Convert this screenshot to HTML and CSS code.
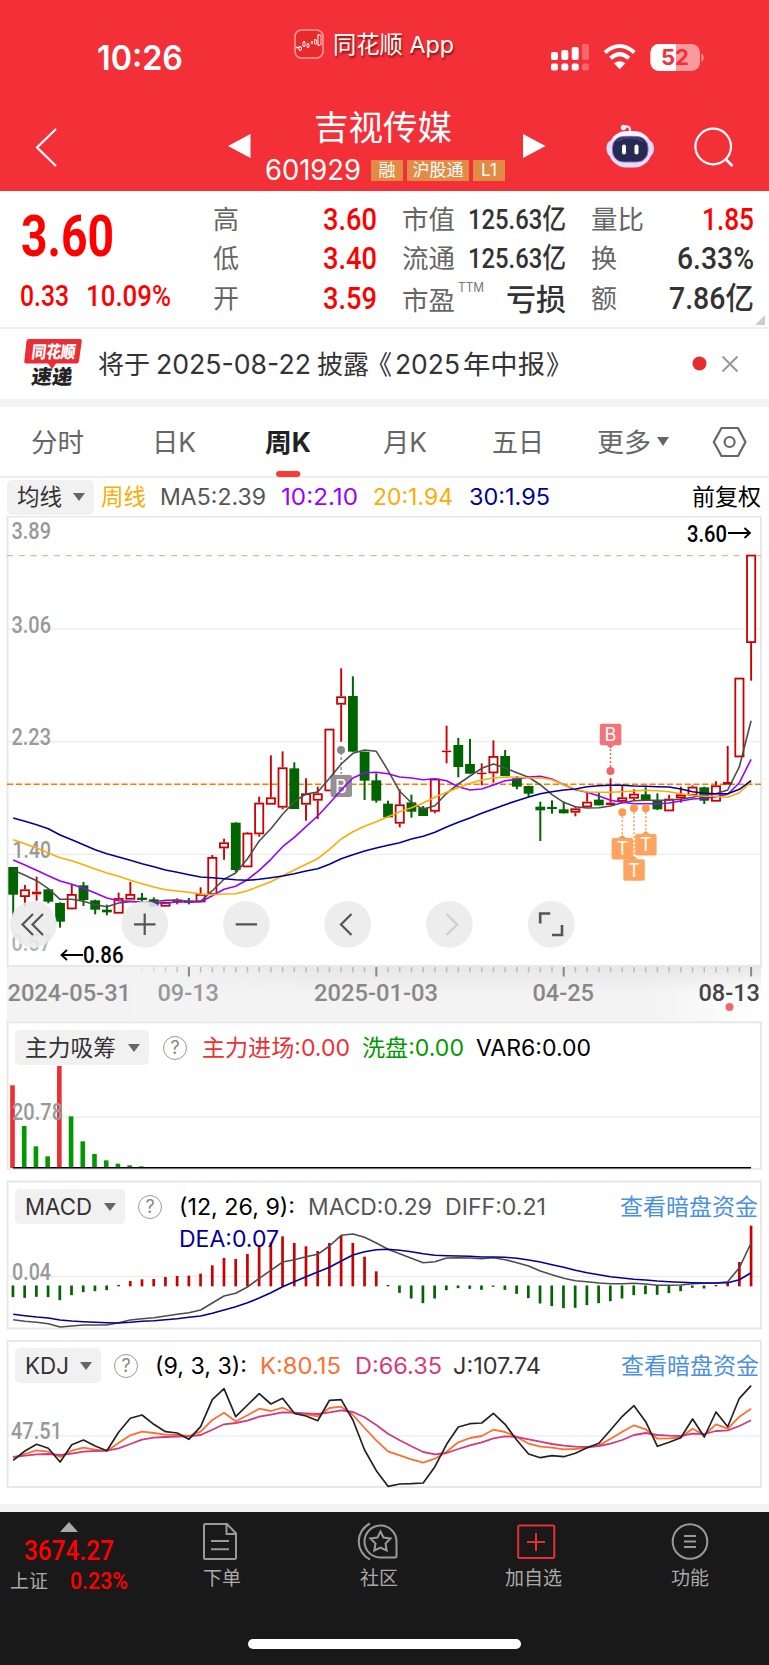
FILE: index.html
```html
<!DOCTYPE html>
<html lang="zh-CN">
<head>
<meta charset="utf-8">
<title>吉视传媒 601929</title>
<link rel="stylesheet" href="styles.css">
</head>
<body>
<header class="header">
  <div class="status">
    <span class="clock" data-w="86">10:26</span>
    <div class="island">
      <svg class="app-icon" width="30" height="30" viewBox="0 0 30 30"><rect x="1" y="1" width="28" height="28" rx="6.5" fill="#e92a2c" stroke="#f79a9c" stroke-width="1.6"/><path d="M2 18.500h3M6 17v5M10 12v6M14 14v5M18 12v3M21 10v5M24.500 5v12" stroke="#fff" stroke-width="1.5"/><path d="M5 18h2.500v3H5zM9 13h2v4H9zM13 15h2v3h-2zM20.500 11h2v4h-2zM24 6h3v10h-3z" fill="#e92a2c" stroke="#fff" stroke-width=".8"/></svg>
      <span data-w="121">同花顺 App</span>
    </div>
    <svg class="signals" width="155" height="30" viewBox="550 43 155 30">
      <g fill="#fff"><rect x="551" y="52" width="7" height="8" rx="2"/><rect x="561.300" y="50" width="7" height="10" rx="2"/><rect x="571.700" y="47" width="7" height="13" rx="2"/><rect x="551" y="63.500" width="7" height="7" rx="2"/><rect x="561.300" y="63.500" width="7" height="7" rx="2"/><rect x="571.700" y="63.500" width="7" height="7" rx="2"/></g>
      <g fill="#f4676c"><rect x="582" y="44" width="7" height="16" rx="2"/><rect x="582" y="63.500" width="7" height="7" rx="2"/></g>
      <g fill="none" stroke="#fff" stroke-width="4"><path d="M605 52.500q14.700-13 29.400 0"/><path d="M610.500 58.300q9.200-8.200 18.400 0"/></g>
      <path d="M614 63.300q5.700-4.300 11.400 0L619.700 69.300z" fill="#fff"/>
      <rect x="650.500" y="44" width="49.500" height="27" rx="8.500" fill="#fa9a9d"/><path d="M676 44h-17a8.500 8.500 0 0 0-8.500 8.500v10a8.500 8.500 0 0 0 8.500 8.500h17z" fill="#fff"/>
      <path d="M701.500 53q4.500 4.500 0 9z" fill="#fa9a9d"/>
      <text x="661" y="65.300" textLength="28" lengthAdjust="spacingAndGlyphs" class="batt">52</text>
    </svg>
  </div>
  <div class="nav">
    <svg width="26" height="42" viewBox="34 126 26 42"><path d="M56 129L37 147.500L56 166" fill="none" stroke="#fff" stroke-width="2.200"/></svg>
    <svg width="24" height="26" viewBox="0 0 24 26"><path d="M0 13L22.500 1v24z" fill="#fff"/></svg>
    <div class="title">
      <h1 data-w="138">吉视传媒</h1>
      <div class="code"><span class="num" data-w="96">601929</span><i>融</i><i>沪股通</i><i>L1</i></div>
    </div>
    <svg width="24" height="26" viewBox="0 0 24 26"><path d="M22.500 13L0 1v24z" fill="#fff"/></svg>
    <svg width="52" height="46" viewBox="604 123 52 46">
      <path d="M629 134v-5q-1-3.500-5.500-2.500" fill="none" stroke="#e9e6f8" stroke-width="2.200"/><circle cx="622.500" cy="127.500" r="2.700" fill="#f2effc"/>
      <ellipse cx="609.500" cy="148.500" rx="4" ry="7.500" fill="#d9dcf8"/><ellipse cx="649" cy="148.500" rx="4" ry="7.500" fill="#cfd2f4"/>
      <rect x="607.500" y="131" width="43.500" height="36.500" rx="18" fill="#dfe0f7"/><path d="M613 139q16-12 32 0" stroke="#f7f6fe" stroke-width="4" fill="none"/>
      <rect x="611.500" y="136.500" width="35.500" height="25.500" rx="11" fill="#252a50" stroke="#9b63d5" stroke-width="1"/><path d="M616 141q13-7 26 0" stroke="#3c4376" stroke-width="2" fill="none"/>
      <rect x="621" y="144.500" width="4" height="10" rx="2" fill="#fff"/><rect x="633.500" y="144.500" width="4" height="10" rx="2" fill="#fff"/>
    </svg>
    <svg width="42" height="42" viewBox="692 126 42 42"><circle cx="712.200" cy="146.500" r="17.800" fill="none" stroke="#fff" stroke-width="2.200"/><path d="M725 159.500l6.500 6.500" stroke="#fff" stroke-width="2.600"/></svg>
  </div>
</header>

<section class="stats">
  <div class="price">
    <b class="num" data-w="93">3.60</b>
    <div class="chg num"><span data-w="49">0.33</span><span data-w="85">10.09%</span></div>
  </div>
  <dl class="cells">
    <dt data-w="26">高</dt><dd class="num red" data-w="54">3.60</dd><dt data-w="53">市值</dt><dd class="num mid" data-w="98">125.63亿</dd><dt data-w="53">量比</dt><dd class="num red" data-w="52">1.85</dd>
    <dt data-w="26">低</dt><dd class="num red" data-w="54">3.40</dd><dt data-w="53">流通</dt><dd class="num mid" data-w="98">125.63亿</dd><dt data-w="26">换</dt><dd class="num" data-w="77">6.33%</dd>
    <dt data-w="26">开</dt><dd class="num red" data-w="54">3.59</dd><dt class="pe"><span data-w="53">市盈</span><sup data-w="26">TTM</sup></dt><dd class="loss" data-w="60">亏损</dd><dt data-w="26">额</dt><dd class="num" data-w="85">7.86亿</dd>
  </dl>
  <svg class="corner" width="10" height="10" viewBox="0 0 10 10"><path d="M10 0v10H0z" fill="#ccc"/></svg>
</section>

<section class="notice">
  <svg width="60" height="60" viewBox="23 332 60 60"><path d="M29 339h51q2 0 1.800 2L79 361q-.3 2.500-2.500 2.500H56l-4 5.500l-4-5.500H26.500q-2.500 0-2.200-2.500L26.500 341q.3-2 2.500-2z" fill="#ea2e33"/>
  <text class="logo-a" transform="skewX(-7)" x="75" y="358" textLength="44" lengthAdjust="spacingAndGlyphs">同花顺</text><text class="logo-b" transform="skewX(-7)" x="78" y="384" textLength="41" lengthAdjust="spacingAndGlyphs">速递</text></svg>
  <span class="msg"><span data-w="52">将于</span><span data-w="155">2025-08-22</span><span data-w="52">披露</span><span data-w="26">《</span><span data-w="65">2025</span><span data-w="82">年中报</span><span data-w="26">》</span></span>
  <svg width="29" height="20" viewBox="692 354 29 20"><circle cx="699.500" cy="363.500" r="7" fill="#e82d31"/></svg>
  <svg width="18" height="18" viewBox="0 0 18 18"><path d="M1.500 1.500l15 15M16.500 1.500l-15 15" stroke="#999" stroke-width="2"/></svg>
</section>

<nav class="tabs">
  <span data-w="53">分时</span><span data-w="44">日K</span><span class="on" data-w="46">周K</span><span data-w="44">月K</span><span data-w="52">五日</span><span data-w="54">更多</span>
  <svg width="12" height="9" viewBox="0 0 12 9"><path d="M0 0h12L6 9z" fill="#666"/></svg>
  <svg width="35" height="32" viewBox="712 425 35 32"><path d="M713.800 441L721.500 427H738L745.500 441L738 455H721.500z" fill="none" stroke="#666" stroke-width="2.200" stroke-linejoin="round"/><circle cx="729.600" cy="441" r="5" fill="none" stroke="#666" stroke-width="2.200"/></svg>
</nav>

<div class="legend">
  <span class="btn"><span data-w="45">均线</span><s></s></span>
  <span class="c-y" data-w="45">周线</span><span class="c-g" data-w="106">MA5:2.39</span><span class="c-p" data-w="77">10:2.10</span><span class="c-y" data-w="80">20:1.94</span><span class="c-b" data-w="81">30:1.95</span><span class="c-k" data-w="69">前复权</span>
</div>
<svg class="kline" id="kline" width="769" height="505" viewBox="0 516 769 505"></svg>

<section class="panel">
  <svg id="main-force" width="769" height="150" viewBox="0 1021 769 150"></svg>
  <div class="bar bar1"><span class="btn"><span data-w="91">主力吸筹</span><s></s></span><em>?</em><span class="c-r" data-w="148">主力进场:0.00</span><span class="c-gr" data-w="102">洗盘:0.00</span><span class="c-k" data-w="115">VAR6:0.00</span></div>
</section>
<section class="panel">
  <svg id="macd" width="769" height="150" viewBox="0 1180 769 150"></svg>
  <div class="bar bar2"><span class="btn"><span data-w="67">MACD</span><s></s></span><em>?</em><span class="c-k" data-w="116">(12, 26, 9):</span><span class="c-g" data-w="124">MACD:0.29</span><span class="c-g" data-w="101">DIFF:0.21</span><span class="link" data-w="138">查看暗盘资金</span><span class="dea c-b" data-w="100">DEA:0.07</span></div>
</section>
<section class="panel">
  <svg id="kdj" width="769" height="150" viewBox="0 1339 769 150"></svg>
  <div class="bar bar3"><span class="btn"><span data-w="44">KDJ</span><s></s></span><em>?</em><span class="c-k" data-w="92">(9, 3, 3):</span><span class="c-o" data-w="81">K:80.15</span><span class="c-m" data-w="87">D:66.35</span><span class="c-d" data-w="88">J:107.74</span><span class="link" data-w="138">查看暗盘资金</span></div>
</section>

<footer class="footer">
  <div class="index"><svg width="18" height="10" viewBox="0 0 18 10"><path d="M0 10L9 0l9 10z" fill="#aaa"/></svg><b class="num" data-w="90">3674.27</b><div><span data-w="38">上证</span><b class="num" data-w="58">0.23%</b></div></div>
  <a class="i1"><svg width="42" height="40" viewBox="199 1521 42 40"><path d="M205 1524h22l9 9.500v24q0 1.500-1.500 1.500h-29.500q-1 0-1-1.500v-32q0-1.500 1-1.500zM226.500 1524v10H236M211 1541h18M211 1549.300h18"/></svg><span data-w="38">下单</span></a>
  <a class="i2"><svg width="42" height="40" viewBox="357 1521 42 40"><path d="M370 1523.500a20 20 0 0 0 0 36M396.500 1541v15q0 1.500-1.500 1.500H380a16 16 0 1 1 16.500-16.500zM380.500 1531.500l3 6l7 1l-5 5l1.200 7l-6.200-3l-6.200 3l1.200-7l-5-5l7-1z"/></svg><span data-w="38">社区</span></a>
  <a class="i3"><svg width="42" height="40" viewBox="515 1521 42 40"><path class="add" d="M519.500 1525.500h33.500q1.300 0 1.300 1.300v30q0 1.300-1.300 1.300h-33.500q-1.300 0-1.300-1.300v-30q0-1.300 1.300-1.300zM536 1533v18M527 1542h18"/></svg><span data-w="57">加自选</span></a>
  <a class="i4"><svg width="42" height="40" viewBox="669 1521 42 40"><circle cx="690" cy="1541.500" r="17.300"/><path d="M684 1536h12M684 1541.500h12M684 1547h12"/></svg><span data-w="38">功能</span></a>
  <div class="home"></div>
</footer>
<script src="chart.js"></script>
</body>
</html>
```
FILE: styles.css
```css
* { box-sizing: border-box; }
body { margin: 0; width: 769px; height: 1665px; overflow: hidden; background: #fff; font-family: Inter, "Noto Sans CJK SC", sans-serif; color: #333; line-height: 1.2; }
svg { display: block; flex: none; }
[data-w] { display: inline-block; white-space: nowrap; transform-origin: 0 50%; flex: none; }
.num { font-family: Roboto, "Noto Sans CJK SC", sans-serif; font-weight: 500; }

.header { height: 191px; background: #f33038; color: #fff; }
.status { height: 100px; display: grid; grid-template-columns: 97px 197px 256px 1fr; }
.clock { grid-column: 2; font-size: 34px; font-weight: 600; line-height: 40px; padding-top: 38px; }
.island { display: flex; align-items: center; gap: 9px; height: 36px; margin-top: 26px; font-size: 23.5px; text-shadow: 1px 2px 2px rgba(90,0,0,.7); }
.island span { padding-top: 2px; }
.signals { margin-top: 43px; }
.batt { font: 700 21px Inter; fill: #f33038; }
.nav { display: grid; grid-template-columns: 34px 194px 33px 262px 82px 88px 1fr; align-items: start; height: 91px; }
.nav > :first-child { grid-column: 2; margin-top: 26px; }
.nav > :nth-child(2), .nav > :nth-child(4) { margin-top: 33px; }
.nav > :nth-child(5) { margin-top: 23px; }
.nav > :nth-child(6) { margin-top: 26px; }
.title { padding-top: 7px; }
.title h1 { margin: 0 0 0 53px; font-size: 34.5px; font-weight: 400; line-height: 42px; display: block; }
.code { display: flex; align-items: center; gap: 4px; height: 22px; margin-top: 10px; padding-left: 4px; }
.code .num { font-size: 28px; font-weight: 400; line-height: 22px; margin-right: 6px; font-family: Inter; }
.code i { font-style: normal; font-size: 17px; line-height: 21px; height: 21px; padding: 0 5.5px; background: #e18b45; min-width: 32px; text-align: center; }

.stats { height: 138px; border-bottom: 2px solid #eee; display: flex; position: relative; }
.price { width: 213px; padding: 16px 0 0 21px; color: #f00; }
.price b { display: block; font-size: 57px; line-height: 60px; font-weight: 700; }
.chg { display: flex; gap: 17px; font-size: 29px; line-height: 34px; margin: 12px 0 0 -1px; }
.cells { margin: 9px 0 0; display: grid; grid-template-columns: 26px 138px 79px 110px 77px 111px; grid-auto-rows: 39.5px; align-items: center; }
.cells dt { font-size: 26px; line-height: 36px; color: #666; }
.cells dt:nth-of-type(3n+2), .cells dt:nth-of-type(3n) { margin-left: 25px; }
.cells dd { margin: 0; justify-self: end; font-size: 31px; line-height: 36px; }
.cells .mid { font-size: 28px; }
.cells .loss { font-size: 30px; font-weight: 500; }
.cells .red { color: #f00; }
.pe { display: flex; position: relative; top: 2px; }
.pe sup { font-size: 13px; line-height: 14px; margin: -3px 0 0 3px; align-self: flex-start; color: #777; }
.corner { position: absolute; right: 4px; bottom: 2px; }

.notice { height: 70px; display: grid; grid-template-columns: 23px 75px 594px 29px 1fr; align-items: center; }
.notice > :first-child { grid-column: 2; margin-top: -4px; }
.logo-a { font: 900 17px "Noto Sans CJK SC"; fill: #fff; }
.logo-b { font: 900 20px "Noto Sans CJK SC"; fill: #222; }
.msg { display: grid; grid-template-columns: 58px 161px 49px 29px 68px 83px 26px; font-size: 26.5px; line-height: 36px; }

.tabs { height: 79px; border-top: 8px solid #f4f4f4; border-bottom: 2px solid #eee; display: grid; grid-template-columns: 31px 121px 113px 118px 109px 105px 60px 55px 1fr; align-items: center; font-size: 26.5px; line-height: 38px; color: #666; }
.tabs > :first-child { grid-column: 2; }
.tabs .on { color: #222; font-weight: 700; position: relative; }
.tabs .on::after { content: ""; position: absolute; left: 11px; bottom: -16px; width: 24px; height: 6px; border-radius: 3px; background: #fa3b32; }

.legend { height: 38px; display: grid; grid-template-columns: 7px 94px 59px 121px 92px 96px 223px 1fr; align-items: center; font-size: 22.5px; line-height: 34px; }
.legend > :first-child { grid-column: 2; }
.btn { display: flex; align-items: center; justify-content: space-between; height: 35px; padding: 0 9px 0 10px; background: #f1f1f1; border-radius: 5px; color: #333; }
.legend .btn { width: 87px; }
.btn s { width: 0; border: solid transparent; border-width: 8px 6px 0; border-top-color: #666; }
.c-y { color: #ffab00; } .c-g { color: #555; } .c-p { color: #9a00ff; } .c-b { color: #000099; } .c-k { color: #000; }
.c-r { color: #ee3035; } .c-gr { color: #009a00; } .c-o { color: #ff6f2e; } .c-m { color: #d43a7d; } .c-d { color: #333; }
.link { color: #4a90e2; }

.panel { display: grid; height: 150px; margin-bottom: 9px; }
.panel > * { grid-area: 1 / 1; }
.bar { display: grid; align-items: center; align-content: start; grid-auto-rows: 35px; padding: 9px 0 0 15px; font-size: 22.5px; line-height: 34px; }
.bar em { width: 24px; height: 24px; border: 1.6px solid #999; border-radius: 50%; color: #888; font-style: normal; font-size: 18px; line-height: 21px; text-align: center; }
.bar1 { grid-template-columns: 134px 14px 39px 160px 114px 1fr; }
.bar2 { grid-template-columns: 110px 13px 41px 129px 137px 175px 1fr; }
.bar3 { grid-template-columns: 86px 13px 41px 105px 95px 98px 168px 1fr; }
.bar .btn + em { grid-column: 3; }
.dea { grid-column: 4; grid-row: 2; margin-top: -6px; }

.axis { font: 500 23px Roboto; fill: #999; }
.badge { font: 400 18px Inter; fill: #fff; }

.footer { margin-top: 15px; height: 161px; border-top: 8px solid #f4f4f4; background: #191919; color: #aaa; display: grid; grid-template-columns: 203px 157px 145px 166px 1fr; grid-template-rows: 127px 10px; font-size: 19px; line-height: 24px; }
.footer a svg { margin-bottom: 6px; fill: none; stroke: #999; stroke-width: 2; }
.footer a .add { stroke: #e62e33; }
.footer a { padding-top: 9px; }
.i1 svg { margin-left: -4px; } .i2 svg { margin-left: -3px; } .i3 svg { margin-left: 10px; } .i4 svg { margin-left: -2px; }
.index { padding: 10px 0 0 10px; }
.index svg { margin-left: 50px; }
.index b { color: #f00; }
.index > b { display: block; font-size: 28px; line-height: 28px; margin: 5px 0 0 14px; }
.index div { display: flex; align-items: center; gap: 22px; line-height: 26px; margin-top: 4px; }
.index div b { font-size: 23px; }
.home { grid-column: 1 / -1; justify-self: center; width: 273px; height: 10px; border-radius: 5px; background: #fff; }
```
FILE: chart.js
```javascript
// Squeeze or stretch each label to its designed width.
document.querySelectorAll('[data-w]').forEach(function (el) {
  var w = +el.dataset.w;
  var range = document.createRange();
  range.selectNodeContents(el);
  var natural = range.getBoundingClientRect().width;
  el.style.width = w + 'px';
  el.style.transform = 'scaleX(' + (w / natural) + ')';
});

var X = function (i) { return 13.2 + 11.713 * i; };
function line(vals, top, color, w) {
  return '<polyline fill="none" stroke="' + color + '" stroke-width="' + (w || 1.6) + '" stroke-linejoin="round" points="' +
    vals.map(function (v, i) { return X(i).toFixed(1) + ',' + (top + v / 3).toFixed(1); }).join(' ') + '"/>';
}
function seg(x1, y1, x2, y2, c, w, extra) {
  return '<line x1="' + x1 + '" y1="' + y1 + '" x2="' + x2 + '" y2="' + y2 + '" stroke="' + c + '" stroke-width="' + w + '" ' + (extra || '') + '/>';
}
function rect(x, y, w, h, f, extra) {
  return '<rect x="' + x + '" y="' + y + '" width="' + w + '" height="' + h + '" fill="' + f + '" ' + (extra || '') + '/>';
}
function text(x, y, w, s, extra) {
  return '<text class="axis" x="' + x + '" y="' + y + '" textLength="' + w + '" lengthAdjust="spacingAndGlyphs" ' + (extra || '') + '>' + s + '</text>';
}
function frame(y, h, mid) {
  return rect(7.5, y, 753.5, h, '#fff', 'stroke="#e8e8e8" stroke-width="2"') + seg(8, mid, 760, mid, '#ececec', 1.3);
}

// Weekly candles: direction, high, body top, body bottom, low (thirds of a pixel from y=760).
var candles = [
  ['g',321,321,404,470],['r',375,388,411,440],['r',350,395,403,422],['g',388,388,425,430],['g',427,429,485,503],['r',374,402,448,448],['g',366,376,420,438],['g',419,421,449,463],
  ['g',434,449,457,466],['r',398,414,461,461],['r',366,402,419,419],['g',399,413,420,427],['g',412,418,440,440],['r',425,425,440,440],['r',415,419,427,433],['g',414,422,428,433],
  ['r',382,402,427,427],['r',285,291,405,405],['r',236,247,265,299],['g',187,188,330,337],['r',216,218,322,322],['r',110,128,223,230],['r',-14,112,134,134],['r',-26,22,143,148],
  ['g',7,25,147,147],['r',55,100,134,182],['r',80,100,122,177],['r',-94,-94,94,94],['r',-275,-191,-166,-55],['g',-251,-192,-25,-25],['g',-25,-25,62,120],['g',40,61,122,128],
  ['g',122,131,172,172],['r',88,133,191,202],['g',104,127,155,173],['g',138,143,168,168],['r',54,56,155,160],['r',-103,-28,-24,10],['g',-66,-45,21,52],['g',-63,12,41,41],
  ['r',10,38,42,76],['r',-59,-12,40,68],['g',-30,-12,48,48],['g',48,55,80,88],['g',77,78,101,110],['g',125,140,151,243],['g',121,141,147,161],['g',125,148,160,160],
  ['r',140,145,158,169],['r',97,125,142,142],['g',99,119,136,136],['r',55,128,135,135],['r',75,112,125,130],['r',88,101,116,122],['g',82,103,120,120],['g',100,120,148,150],
  ['r',105,116,154,154],['r',80,103,115,128],['r',76,80,107,107],['g',80,82,122,132],['r',64,76,125,125],['r',-42,66,74,74],['r',-247,-247,-8,-8],['r',-616,-616,-351,-238]
];
var ma5 = [330,346,362,386,418,418,424,434,440,429,425,425,425,421,420,424,424,392,358,339,296,243,206,163,125,102,96,55,12,-20,-30,-26,31,94,128,148,137,100,72,48,25,12,24,38,52,74,104,127,140,144,143,138,128,122,121,121,120,118,112,104,101,90,20,-118];
var ma10 = [300,315,331,347,363,373,385,399,414,422,424,426,428,430,425,427,425,407,388,379,359,331,298,260,232,200,168,130,90,54,38,37,41,51,54,59,56,62,80,90,87,75,62,58,51,49,57,74,89,97,108,121,127,131,131,131,129,123,117,115,110,103,68,-2];
var ma20 = [239,251,264,279,293,302,314,327,339,349,361,371,381,389,393,397,402,404,402,401,392,379,365,347,330,313,296,268,237,215,199,185,170,155,143,129,112,97,83,70,60,54,51,52,54,53,59,74,88,96,97,97,95,93,91,92,95,101,106,109,109,112,98,66];
var ma30 = [174,184,194,206,225,239,254,269,281,291,301,311,320,330,337,344,351,353,356,359,361,358,353,348,341,333,326,313,296,284,273,264,256,248,237,229,217,201,187,174,160,147,134,122,111,101,95,90,87,80,77,76,76,78,79,80,81,87,95,100,101,101,88,62];

(function () {
  var s = '<defs><linearGradient id="fade"><stop offset="0" stop-color="#f3f3f3"/><stop offset=".85" stop-color="#f3f3f3"/><stop offset="1" stop-color="#fff"/></linearGradient>' +
    '<linearGradient id="shade" x2="0" y2="1"><stop offset="0" stop-color="#e8e8e8"/><stop offset=".5" stop-color="#e8e8e8" stop-opacity="0"/></linearGradient>' +
    '<linearGradient id="left"><stop offset="0" stop-color="#f4f4f4"/><stop offset="1" stop-color="#f4f4f4" stop-opacity="0"/></linearGradient></defs>';
  s += rect(7, 967, 755, 54, 'url(#fade)') + rect(130, 967, 631, 54, 'url(#shade)') + rect(130, 967, 180, 54, 'url(#left)');
  s += frame(516.5, 449.5, 629.2) + seg(8, 741.7, 760, 741.7, '#ececec', 1.3) + seg(8, 854.3, 760, 854.3, '#ececec', 1.3);
  s += seg(7, 555.7, 761, 555.7, '#e0b98c', 1.3, 'stroke-dasharray="6 5.72"');
  s += seg(7, 784.3, 761, 784.3, '#ff7a00', 1.6, 'stroke-dasharray="6.3 2.5"');
  s += text(11.5, 539.3, 39.5, '3.89') + text(11.5, 632.5, 39.5, '3.06') + text(11.5, 745.2, 39.5, '2.23') + text(12.5, 857.5, 38.5, '1.40') + text(11.5, 951, 39.5, '0.57', 'opacity=".75"');
  candles.forEach(function (c, i) {
    var x = X(i), y = function (v) { return 760 + v / 3; };
    if (i === 28) {
      s += seg(341.2, 752, 341.2, 774, '#888', 1.4, 'stroke-dasharray="3 2"') + '<circle cx="341" cy="750" r="4" fill="#888"/>' + rect(330.500, 775, 21.500, 22, '#929292', 'rx="2"') + '<text class="badge" x="335" y="792.500">B</text>';
    }
    if (c[0] === 'g') {
      s += seg(x, y(c[1]), x, y(c[4]), '#006400', 2) + rect(x - 4.9, y(c[2]), 9.8, (c[3] - c[2]) / 3, '#006400');
    } else {
      if (c[1] < c[2]) s += seg(x, y(c[1]), x, y(c[2]), '#cc0000', 1.9);
      if (c[4] > c[3]) s += seg(x, y(c[3]), x, y(c[4]), '#cc0000', 1.9);
      var h = (c[3] - c[2]) / 3;
      s += h < 3.2 ? rect(x - 4.7, y(c[2]), 9.4, Math.max(h, 1.5), '#cc0000')
        : rect(x - 4.1, y(c[2]) + 0.9, 8.2, h - 1.8, '#fff', 'stroke="#cc0000" stroke-width="1.8"');
    }
  });
  s += line(ma5, 760, '#4d4d4d') + line(ma10, 760, '#9a00ff') + line(ma20, 760, '#ffab00') + line(ma30, 760, '#000099');

  function marker(x, dotY, boxY, label, color, below) {
    var edge = below ? boxY : boxY + 21.5;
    return seg(x, dotY, x, edge, color, 1.5, 'stroke-dasharray="2 2"') + '<circle cx="' + x + '" cy="' + dotY + '" r="4" fill="' + color + '"/>' +
      rect(x - 10.7, boxY, 21.5, 21.5, color, 'rx="2" opacity=".9"') +
      '<path fill="' + color + '" d="M' + (x - 4) + ' ' + edge + 'l4 ' + (below ? -3 : 3) + 'l4 ' + (below ? 3 : -3) + 'z"/>' +
      '<text class="badge" text-anchor="middle" x="' + x + '" y="' + (boxY + 17.3) + '">' + label + '</text>';
  }
  s += marker(610.5, 771, 723.8, 'B', '#f2646a') + marker(622.3, 812.3, 838, 'T', '#ff9a4d', true) + marker(645.8, 808.3, 834, 'T', '#ff9a4d', true) + marker(634, 808.3, 859.3, 'T', '#ff9a4d', true);

  s += text(687, 541.5, 40, '3.60', 'style="fill:#000"') + text(83, 963.3, 40.5, '0.86', 'style="fill:#000"');
  s += '<g fill="none" stroke="#000" stroke-width="1.8"><path d="M728 533h22M744.500 528l5.500 5l-5.500 5M83 955H61.500M67 950l-5.500 5l5.500 5"/></g>';

  [33.3, 144.7, 246.3, 347.7, 449.3, 551.3].forEach(function (x) { s += '<circle cx="' + x + '" cy="924.3" r="23.4" fill="#ebebeb" fill-opacity=".88"/>'; });
  s += '<g fill="none" stroke="#555" stroke-width="2.2"><path d="M33 914L22.500 924.500L33 935M43 914L32.500 924.500L43 935M134 924.300h21.500M144.700 913.500v21.500M235.700 924.300H257M351.500 914L341 924.500L351.500 935"/><path stroke-width="2.600" d="M540.200 923.500V913.500h10M562 925v10H552"/><path stroke="#cfcfcf" d="M446.500 914L457 924.500L446.500 935"/></g>';

  for (var i = 11; i < 64; i++) {
    var big = i % 16 === 15;
    s += seg(X(i), 967, X(i), big ? 976.5 : 972.5, big ? '#888' : '#bbb', big ? 2 : 1.5, i < 15 ? 'opacity="' + (i - 10) / 5 + '"' : '');
  }
  s += text(7.5, 1001.2, 123.5, '2024-05-31', 'style="fill:#888"') + text(157.5, 1001.2, 61.5, '09-13') + text(314, 1001.2, 124, '2025-01-03', 'style="fill:#888"') + text(532.5, 1001.2, 61.5, '04-25', 'style="fill:#888"') + text(698.5, 1001.2, 61.5, '08-13', 'style="fill:#444"');
  s += '<circle cx="729.500" cy="1007" r="4" fill="#f4666b"/>';
  document.getElementById('kline').innerHTML = s;
})();

(function () {
  var tops = [211,333,394,424,153,304,379,417,436,446,451,454,456];
  var s = frame(1022.3, 146.5, 1117.2);
  tops.forEach(function (v, i) { s += rect(X(i) - 3, 1015 + v / 3, 4.6, (459 - v) / 3, i === 0 || i === 4 ? '#ee2e33' : '#009900'); });
  s += seg(13, 1167.8, 751, 1167.8, '#000', 1.6) + text(12, 1120.3, 51, '20.78');
  document.getElementById('main-force').innerHTML = s;
})();

(function () {
  var ends = [846,848,845,846,855,840,831,828,825,810,798,793,792,786,783,782,776,751,729,732,717,694,682,664,684,694,708,684,662,684,725,769,810,833,850,864,850,825,819,821,824,815,824,836,849,865,873,879,878,870,864,858,850,840,837,839,834,828,818,820,810,804,741,632];
  var diff = [914,919,922,926,936,933,930,930,930,923,915,911,908,903,898,893,885,864,843,835,816,790,766,741,734,725,718,693,661,657,667,684,703,716,730,743,740,729,728,729,731,728,734,743,753,768,779,790,797,800,804,806,806,805,807,811,811,810,806,805,804,800,758,684];
  var dea = [898,902,906,909,915,918,920,922,923,924,922,919,917,914,911,907,903,895,885,875,863,849,833,815,800,785,771,757,738,720,710,704,703,706,710,716,721,722,723,724,726,726,727,730,735,741,749,757,766,773,779,785,789,793,795,798,800,802,803,804,804,803,794,773];
  var s = frame(1181.5, 147, 1276.5);
  ends.forEach(function (v, i) {
    s += v > 812 ? rect(X(i) - 1.6, 1285.5, 2.7, (v - 811) / 3, '#006400') : rect(X(i) - 1.4, 1015 + v / 3, 2.7, (814 - v) / 3, '#cc0000');
  });
  s += line(diff, 1015, '#4d4d4d') + line(dea, 1015, '#000099') + text(12, 1280, 39, '0.04');
  document.getElementById('macd').innerHTML = s;
})();

(function () {
  var k = [368,357,346,350,366,347,338,344,348,324,301,290,294,299,300,303,290,255,233,259,241,221,228,218,234,238,244,219,215,240,279,316,349,361,373,383,371,350,322,309,303,284,291,306,326,335,338,343,342,338,331,311,290,271,283,311,310,307,281,300,268,281,245,221];
  var d = [366,362,358,357,360,356,350,348,347,340,327,314,308,306,305,304,300,284,268,264,257,245,239,232,233,235,237,232,226,231,247,270,296,316,334,351,358,354,342,331,322,310,304,306,313,320,327,332,335,336,333,326,315,300,294,300,302,303,296,297,288,286,273,256];
  var j = [376,348,328,340,381,329,315,333,347,292,250,240,268,290,294,313,275,194,161,245,210,176,207,190,235,243,257,196,194,255,345,407,454,447,446,444,395,328,276,266,264,235,268,316,357,368,362,365,355,338,325,285,244,212,260,334,322,308,252,306,231,275,190,152];
  var s = frame(1341, 146, 1435.8) + text(11, 1439.2, 51, '47.51');
  s += line(k, 1335, '#ff6f2e', 1.8) + line(d, 1335, '#d43a7d', 1.8) + line(j, 1335, '#222', 1.7);
  document.getElementById('kdj').innerHTML = s;
})();
```
